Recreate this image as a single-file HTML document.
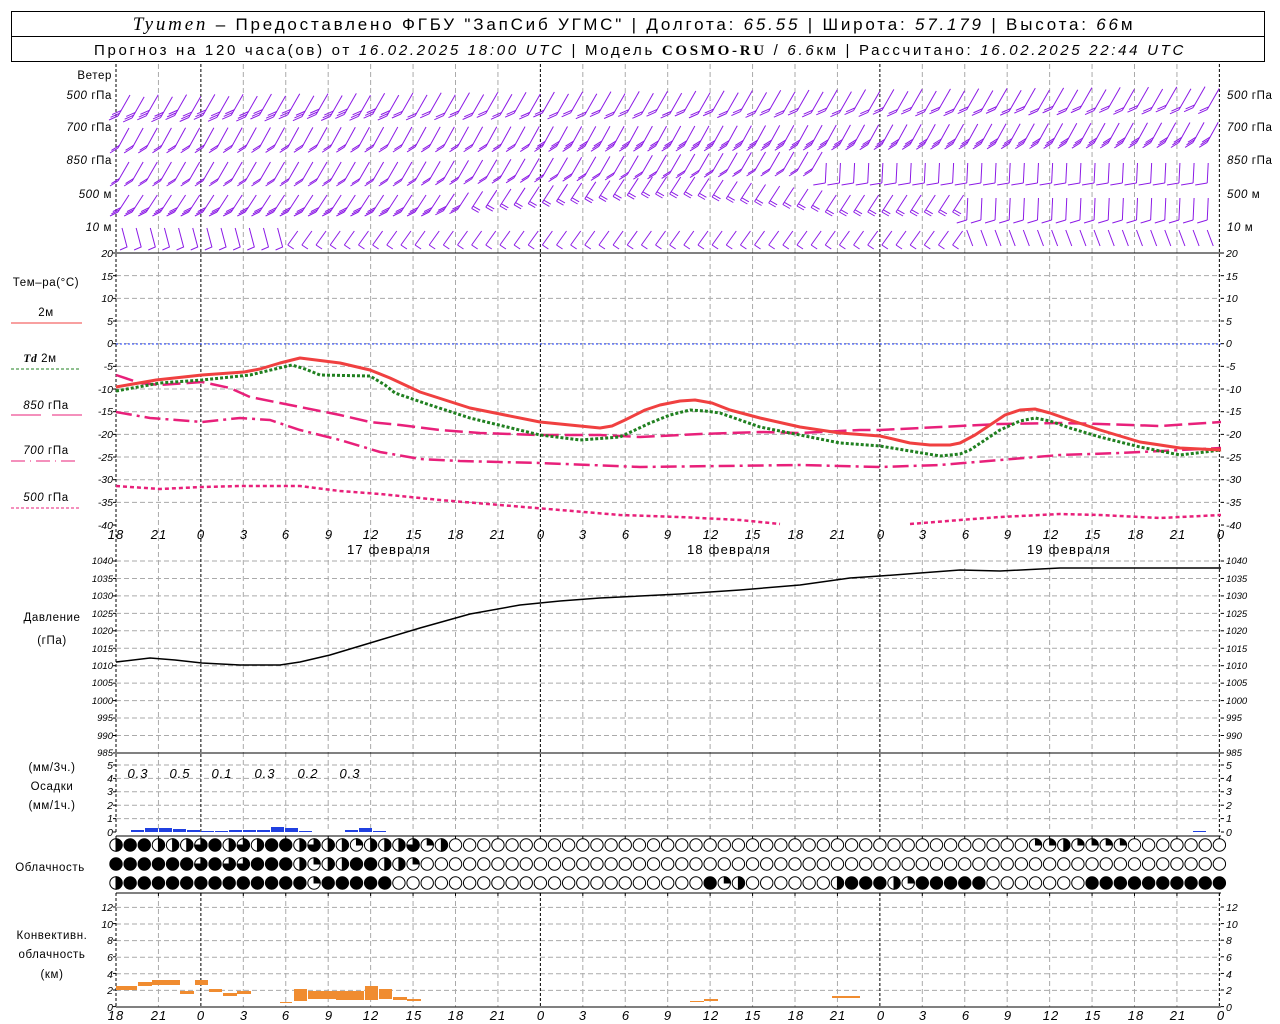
<!DOCTYPE html>
<html><head><meta charset="utf-8"><style>
html,body{margin:0;padding:0;background:#fff;width:1280px;height:1024px;overflow:hidden}
svg{display:block}
text{font-family:"Liberation Sans","DejaVu Sans",sans-serif;fill:#000}
.t{font-size:11.5px;letter-spacing:0.6px}
.ax{font-size:10.5px;font-style:italic}
.axr{font-size:10.5px;font-style:italic}
.bt{font-size:13px;font-style:italic;text-anchor:middle;letter-spacing:1px}
</style></head><body>
<svg id="s" width="1280" height="1024" viewBox="0 0 1280 1024" xmlns="http://www.w3.org/2000/svg">
<rect x="0" y="0" width="1280" height="1024" fill="#fff"/>
<!-- header -->
<rect x="11.5" y="11.5" width="1253" height="25" fill="none" stroke="#000"/>
<rect x="11.5" y="36.5" width="1253" height="25" fill="none" stroke="#000"/>
<text x="634" y="30" text-anchor="middle" style="font-size:17px;letter-spacing:2.8px"><tspan style="font-family:'Liberation Serif',serif;font-style:italic;font-size:19px">Tyumen</tspan> – Предоставлено ФГБУ "ЗапСиб УГМС" | Долгота: <tspan font-style="italic">65.55</tspan> | Широта: <tspan font-style="italic">57.179</tspan> | Высота: <tspan font-style="italic">66</tspan>м</text>
<text x="640" y="55" text-anchor="middle" style="font-size:15px;letter-spacing:2.7px">Прогноз на 120 часа(ов) от <tspan font-style="italic">16.02.2025 18:00 UTC</tspan>  | Модель <tspan style="font-family:'Liberation Serif',serif;font-weight:bold">COSMO-RU</tspan> / <tspan font-style="italic">6.6</tspan>км | Рассчитано: <tspan font-style="italic">16.02.2025 22:44 UTC</tspan></text>

<g id="grid"></g>
<g id="barbs" stroke="#8c1ae6" stroke-width="1" fill="none"></g>

<!-- wind labels -->
<g class="t" text-anchor="end">
<text x="112" y="79">Ветер</text>
<text x="112" y="99"><tspan font-style="italic">500</tspan> гПа</text>
<text x="112" y="131"><tspan font-style="italic">700</tspan> гПа</text>
<text x="112" y="164"><tspan font-style="italic">850</tspan> гПа</text>
<text x="112" y="198"><tspan font-style="italic">500</tspan>  м</text>
<text x="112" y="231"><tspan font-style="italic">10</tspan>   м</text>
</g>
<g class="t">
<text x="1227" y="99"><tspan font-style="italic">500</tspan> гПа</text>
<text x="1227" y="131"><tspan font-style="italic">700</tspan> гПа</text>
<text x="1227" y="164"><tspan font-style="italic">850</tspan> гПа</text>
<text x="1227" y="198"><tspan font-style="italic">500</tspan>  м</text>
<text x="1227" y="231"><tspan font-style="italic">10</tspan>   м</text>
</g>

<!-- temperature axis labels -->
<g class="ax" text-anchor="end">
<text x="113" y="257">20</text><text x="113" y="280">15</text><text x="113" y="302">10</text><text x="113" y="325">5</text><text x="113" y="347">0</text><text x="113" y="370">-5</text><text x="113" y="393">-10</text><text x="113" y="415">-15</text><text x="113" y="438">-20</text><text x="113" y="461">-25</text><text x="113" y="483">-30</text><text x="113" y="506">-35</text><text x="113" y="529">-40</text>
</g>
<g class="axr">
<text x="1226" y="257">20</text><text x="1226" y="280">15</text><text x="1226" y="302">10</text><text x="1226" y="325">5</text><text x="1226" y="347">0</text><text x="1226" y="370">-5</text><text x="1226" y="393">-10</text><text x="1226" y="415">-15</text><text x="1226" y="438">-20</text><text x="1226" y="461">-25</text><text x="1226" y="483">-30</text><text x="1226" y="506">-35</text><text x="1226" y="529">-40</text>
</g>
<!-- temperature legend -->
<g class="t" text-anchor="middle">
<text x="46" y="286">Тем–ра(°С)</text>
<text x="46" y="316">2м</text>
<text x="40" y="362"><tspan style="font-family:'Liberation Serif',serif;font-style:italic;font-weight:bold">Td</tspan>  2м</text>
<text x="46" y="409"><tspan font-style="italic">850</tspan> гПа</text>
<text x="46" y="454"><tspan font-style="italic">700</tspan> гПа</text>
<text x="46" y="501"><tspan font-style="italic">500</tspan> гПа</text>
</g>
<line x1="11" y1="323" x2="82" y2="323" stroke="#f04040" stroke-width="1"/>
<line x1="11" y1="369" x2="79" y2="369" stroke="#208020" stroke-dasharray="3,2"/>
<line x1="11" y1="415" x2="41" y2="415" stroke="#e8207a"/><line x1="52" y1="415" x2="82" y2="415" stroke="#e8207a"/>
<line x1="11" y1="461" x2="79" y2="461" stroke="#e8207a" stroke-dasharray="14,5,1,5"/>
<line x1="11" y1="508" x2="79" y2="508" stroke="#e8207a" stroke-dasharray="3,2"/>

<!-- temperature curves -->
<line x1="116" y1="344" x2="1221" y2="344" stroke="#2040ff" stroke-dasharray="2,2"/>
<polyline fill="none" stroke="#e8207a" stroke-width="2.5" stroke-dasharray="4,3" points="116,486 160,489 202,487 240,486 300,486 340,491 380,494 440,500 500,505 560,510 620,515 680,517 740,520 780,524"/>
<polyline fill="none" stroke="#e8207a" stroke-width="2.5" stroke-dasharray="4,3" points="910,524 960,520 1000,517 1060,514 1100,515 1160,518 1221,515"/>
<polyline fill="none" stroke="#e8207a" stroke-width="2.5" stroke-dasharray="16,5,3,5" points="116,412 150,418 202,422 240,418 270,420 300,430 340,440 380,452 420,459 460,461 540,463 640,467 720,466 800,465 880,467 940,465 1000,460 1060,455 1120,453 1221,448"/>
<polyline fill="none" stroke="#e8207a" stroke-width="2.5" stroke-dasharray="18,6" points="116,375 140,383 160,385 202,382 230,388 250,397 300,407 340,415 370,422 400,425 440,430 480,433 540,435 600,435 640,437 700,434 760,432 800,433 860,430 880,430 940,427 1000,424 1060,423 1100,424 1160,426 1221,422"/>
<polyline fill="none" stroke="#208020" stroke-width="3" stroke-dasharray="3,2" stroke-linejoin="round" points="116,391 160,383 202,380 250,375 275,369 292,365 305,369 320,375 370,376 385,385 395,393 430,405 470,418 540,435 580,440 620,437 650,423 670,415 690,410 705,411 720,413 760,427 800,435 840,443 880,446 940,456 960,454 970,450 1000,430 1020,421 1035,418 1050,421 1070,428 1100,437 1140,447 1180,455 1221,450"/>
<polyline fill="none" stroke="#f04040" stroke-width="3" stroke-linejoin="round" points="116,387 156,380 202,375 244,372 260,369 280,363 300,358 340,363 370,370 390,378 420,392 470,408 540,422 600,428 612,426 625,420 645,410 660,405 680,401 695,400 712,403 730,410 760,418 800,427 840,433 880,436 910,443 930,445 950,445 960,443 975,435 990,425 1005,415 1020,410 1035,409 1050,413 1070,420 1100,430 1140,442 1180,448 1221,450"/>

<!-- hour labels (temp panel) -->
<g class="bt">
<text x="116" y="539">18</text><text x="159" y="539">21</text><text x="201" y="539">0</text><text x="244" y="539">3</text><text x="286" y="539">6</text><text x="329" y="539">9</text><text x="371" y="539">12</text><text x="414" y="539">15</text><text x="456" y="539">18</text><text x="498" y="539">21</text><text x="541" y="539">0</text><text x="583" y="539">3</text><text x="626" y="539">6</text><text x="668" y="539">9</text><text x="711" y="539">12</text><text x="753" y="539">15</text><text x="796" y="539">18</text><text x="838" y="539">21</text><text x="881" y="539">0</text><text x="923" y="539">3</text><text x="966" y="539">6</text><text x="1008" y="539">9</text><text x="1051" y="539">12</text><text x="1093" y="539">15</text><text x="1136" y="539">18</text><text x="1178" y="539">21</text><text x="1221" y="539">0</text>
</g>
<g style="font-size:13px;text-anchor:middle;letter-spacing:1.2px">
<text x="389" y="554">17 февраля</text><text x="729" y="554">18 февраля</text><text x="1069" y="554">19 февраля</text>
</g>

<!-- pressure -->
<g class="ax" text-anchor="end" style="font-size:9.5px">
<text x="113" y="564">1040</text><text x="113" y="582">1035</text><text x="113" y="599">1030</text><text x="113" y="617">1025</text><text x="113" y="634">1020</text><text x="113" y="652">1015</text><text x="113" y="669">1010</text><text x="113" y="686">1005</text><text x="113" y="704">1000</text><text x="113" y="721">995</text><text x="113" y="739">990</text><text x="113" y="756">985</text>
</g>
<g class="axr" style="font-size:9.5px">
<text x="1226" y="564">1040</text><text x="1226" y="582">1035</text><text x="1226" y="599">1030</text><text x="1226" y="617">1025</text><text x="1226" y="634">1020</text><text x="1226" y="652">1015</text><text x="1226" y="669">1010</text><text x="1226" y="686">1005</text><text x="1226" y="704">1000</text><text x="1226" y="721">995</text><text x="1226" y="739">990</text><text x="1226" y="756">985</text>
</g>
<g class="t" text-anchor="middle">
<text x="52" y="621">Давление</text><text x="52" y="644">(гПа)</text>
</g>
<polyline fill="none" stroke="#000" stroke-width="1.5" stroke-linejoin="round" points="116,662 150,658 175,660 202,663 240,665 280,665 300,662 330,655 380,640 420,628 470,614 520,605 560,601 600,598 680,594 740,590 800,585 850,578 880,576 920,573 960,570 1000,571 1060,568 1221,568"/>

<!-- precip -->
<g class="ax" text-anchor="end">
<text x="113" y="769">5</text><text x="113" y="782">4</text><text x="113" y="795">3</text><text x="113" y="809">2</text><text x="113" y="822">1</text><text x="113" y="836">0</text>
</g>
<g class="axr">
<text x="1226" y="769">5</text><text x="1226" y="782">4</text><text x="1226" y="795">3</text><text x="1226" y="809">2</text><text x="1226" y="822">1</text><text x="1226" y="836">0</text>
</g>
<g class="t" text-anchor="middle">
<text x="52" y="771">(мм/3ч.)</text><text x="52" y="790">Осадки</text><text x="52" y="809">(мм/1ч.)</text>
<text x="50" y="871">Облачность</text>
<text x="52" y="939">Конвективн.</text><text x="52" y="958">облачность</text><text x="52" y="978">(км)</text>
</g>
<g style="font-size:13px;font-style:italic;letter-spacing:1px" text-anchor="middle">
<text x="138" y="778">0.3</text><text x="180" y="778">0.5</text><text x="222" y="778">0.1</text><text x="265" y="778">0.3</text><text x="308" y="778">0.2</text><text x="350" y="778">0.3</text>
</g>
<g fill="#2040e0">
<rect x="131" y="830" width="13" height="2"/><rect x="145" y="828" width="13" height="4"/><rect x="159" y="828" width="13" height="4"/><rect x="173" y="829" width="13" height="3"/><rect x="187" y="830" width="13" height="2"/><rect x="201" y="831" width="13" height="1"/><rect x="215" y="831" width="13" height="1"/><rect x="229" y="830" width="13" height="2"/><rect x="243" y="830" width="13" height="2"/><rect x="257" y="830" width="13" height="2"/><rect x="271" y="827" width="13" height="5"/><rect x="285" y="828" width="13" height="4"/><rect x="299" y="831" width="13" height="1"/><rect x="345" y="830" width="13" height="2"/><rect x="359" y="828" width="13" height="4"/><rect x="373" y="831" width="13" height="1"/><rect x="1193" y="831" width="13" height="1"/>
</g>
<g id="clouds" stroke="#000" stroke-width="1"></g>

<!-- convective -->
<g class="ax" text-anchor="end">
<text x="113" y="911">12</text><text x="113" y="928">10</text><text x="113" y="944">8</text><text x="113" y="961">6</text><text x="113" y="978">4</text><text x="113" y="994">2</text><text x="113" y="1011">0</text>
</g>
<g class="axr">
<text x="1226" y="911">12</text><text x="1226" y="928">10</text><text x="1226" y="944">8</text><text x="1226" y="961">6</text><text x="1226" y="978">4</text><text x="1226" y="994">2</text><text x="1226" y="1011">0</text>
</g>
<g fill="#f08c30">
<rect x="116" y="986" width="8" height="4"/><rect x="124" y="986" width="13" height="4"/><rect x="138" y="982" width="14" height="4"/><rect x="152" y="980" width="28" height="5"/><rect x="180" y="991" width="14" height="3"/><rect x="195" y="980" width="13" height="5"/><rect x="209" y="989" width="13" height="3"/><rect x="223" y="993" width="14" height="3"/><rect x="237" y="991" width="14" height="3"/><rect x="280" y="1002" width="12" height="1"/><rect x="294" y="989" width="13" height="12"/><rect x="308" y="991" width="28" height="8"/><rect x="336" y="991" width="14" height="9"/><rect x="350" y="991" width="14" height="9"/><rect x="365" y="986" width="13" height="14"/><rect x="379" y="989" width="13" height="10"/><rect x="393" y="997" width="14" height="3"/><rect x="407" y="999" width="14" height="2"/><rect x="690" y="1001" width="14" height="1"/><rect x="704" y="999" width="14" height="2"/><rect x="832" y="996" width="28" height="2"/>
</g>
<g class="bt">
<text x="116" y="1020">18</text><text x="159" y="1020">21</text><text x="201" y="1020">0</text><text x="244" y="1020">3</text><text x="286" y="1020">6</text><text x="329" y="1020">9</text><text x="371" y="1020">12</text><text x="414" y="1020">15</text><text x="456" y="1020">18</text><text x="498" y="1020">21</text><text x="541" y="1020">0</text><text x="583" y="1020">3</text><text x="626" y="1020">6</text><text x="668" y="1020">9</text><text x="711" y="1020">12</text><text x="753" y="1020">15</text><text x="796" y="1020">18</text><text x="838" y="1020">21</text><text x="881" y="1020">0</text><text x="923" y="1020">3</text><text x="966" y="1020">6</text><text x="1008" y="1020">9</text><text x="1051" y="1020">12</text><text x="1093" y="1020">15</text><text x="1136" y="1020">18</text><text x="1178" y="1020">21</text><text x="1221" y="1020">0</text>
</g>
</svg>
<script>
(function(){
var NS="http://www.w3.org/2000/svg";
function el(p,n,a){var e=document.createElementNS(NS,n);for(var k in a)e.setAttribute(k,a[k]);p.appendChild(e);return e;}
var g=document.getElementById('grid');
var L=116,R=1221,S=14.1458;
function X(h){return L+h*S;}
function hl(y){el(g,'line',{x1:L,x2:R,y1:y,y2:y,stroke:'#aaa','stroke-dasharray':'5,3'});}
for(var i=1;i<12;i++)hl(253+i*22.67);
for(var i=0;i<11;i++)hl(561+i*17.45);
for(var i=1;i<6;i++)hl(832-i*13.4);
for(var i=1;i<=6;i++)hl(1007-i*16.6);
var segs=[[64,832],[893,1007]];
for(var h=0;h<=78;h+=3){var x=X(h);var day=(h-6)%24==0;var edge=(h==0||h==78);
 segs.forEach(function(s){el(g,'line',{x1:x,x2:x,y1:s[0],y2:s[1],stroke:(day||edge)?'#000':'#aaa','stroke-dasharray':(day||edge)?'3,2':'5,3'});});
 el(g,'line',{x1:x,x2:x,y1:836,y2:839,stroke:'#000'});el(g,'line',{x1:x,x2:x,y1:893,y2:896,stroke:'#000'});
}
[253,753,836,893,1007].forEach(function(y){el(g,'line',{x1:L,x2:R,y1:y,y2:y,stroke:'#000'});});
[[253,525,22.67],[561,753,17.45],[765,832,13.4],[907,1007,16.6]].forEach(function(t){for(var y=t[0];y<=t[1]+0.5;y+=t[2]){el(g,'line',{x1:L-3,x2:L,y1:y,y2:y,stroke:'#000'});el(g,'line',{x1:R,x2:R+3,y1:y,y2:y,stroke:'#000'});}});
var b=document.getElementById('barbs');
function barb(x,y,dx,dy,nf,fx,fy){el(b,'line',{x1:x,y1:y,x2:x+dx,y2:y+dy});
 for(var k=0;k<nf;k++){var px=x+dx*k*0.13,py=y+dy*k*0.13;el(b,'line',{x1:px,y1:py,x2:px+fx,y2:py+fy});}}
for(var i=0;i<78;i++){var x=X(i)+2;
 barb(x,116-(i<40?i*0.1:4+(i-40)*0.12)+(i%2)*2,12,-21,i<20?3:2,-9,4);
 barb(x,148-(i<40?i*0.05:2+(i-40)*0.1),11,-20,i<30?2:3,-8,5);
 if(i<50){barb(x,181-(i>20?Math.min((i-20)*0.4,10):0),11,-19,2,-8,5);}
 else{barb(x,183,1,-20,1,-12,2);}
 var y5=212; if(i>22&&i<50)y5=212-Math.min((i-22)*1.2,18)+(i>40?(i-40)*1.5:0);
 if(i<60)barb(x,y5,11,-17,i<25?3:2,i<25?-8:7,4);
 else barb(x,220,1,-22,1,-10,3);
 if(i<12)el(b,'polyline',{points:(x+4)+',228 '+(x+9)+',247 '+(x+2)+',250'});
 else if(i<60)barb(x,245,10,-14,1,6,4);
 else barb(x,230,6,16,1,0,0);
}
var c=document.getElementById('clouds');
var r1="HFFHHHTFHTHFFHTHHQHHHTQHOOOOOOOOOOOOOOOOOOOOOOOOOOOOOOOOOOOOOOOOOQQHQQQQOOOOOOO";
var r2="FFFFFFTFTTFFFHQHHFFHHQOOOOOOOOOOOOOOOOOOOOOOOOOOOOOOOOOOOOOOOOOOOOOOOOOOOOOOOOO";
var r3="HFFFFFFFFFFFFFQFFFFFOOOOOOOOOOOOOOOOOOOOOOFQHOOOOOOHFFFHQFFFFFOOOOOOOFFFFFFFFFF";
function circ(x,y,t){var r=6.2;
 if(t=='F'){el(c,'circle',{cx:x,cy:y,r:r,fill:'#000'});return;}
 el(c,'circle',{cx:x,cy:y,r:r,fill:'#fff'});
 if(t=='H')el(c,'path',{d:'M'+x+','+(y-r)+' A'+r+','+r+' 0 0 1 '+x+','+(y+r)+' Z',fill:'#000'});
 if(t=='Q')el(c,'path',{d:'M'+x+','+y+' L'+x+','+(y-r)+' A'+r+','+r+' 0 0 1 '+(x+r)+','+y+' Z',fill:'#000'});
 if(t=='T')el(c,'path',{d:'M'+x+','+y+' L'+x+','+(y-r)+' A'+r+','+r+' 0 1 1 '+(x-r)+','+y+' Z',fill:'#000'});
}
[[r1,845],[r2,864],[r3,883]].forEach(function(a){for(var i=0;i<79;i++)circ(X(i),a[1],a[0][i]||'O');});
})();
</script>
</body></html>
